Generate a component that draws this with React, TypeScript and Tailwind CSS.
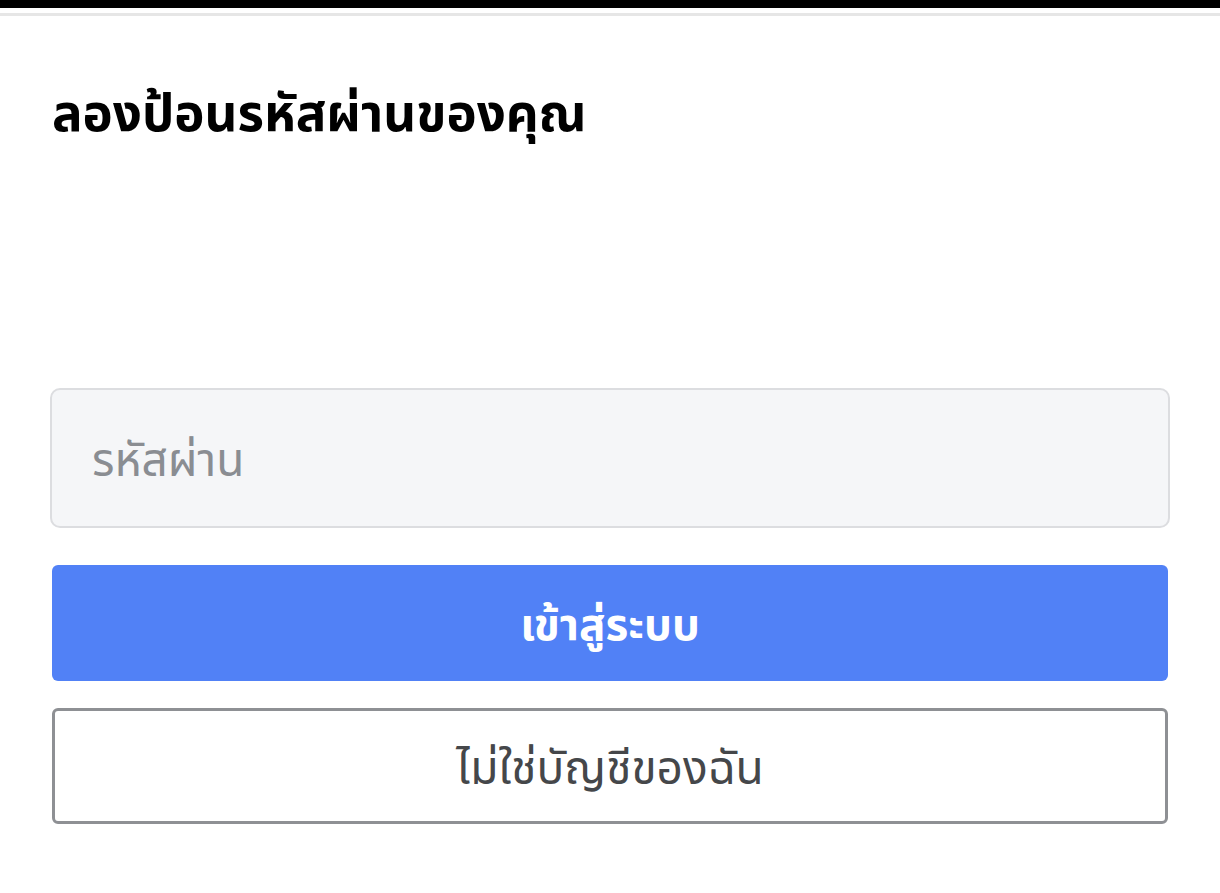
export default function App() {
  return (
    <div className="min-h-[893px] w-[1220px] bg-white font-['Noto_Sans','Noto_Sans_Thai',sans-serif]">
      {/* status bar edge */}
      <div className="h-[8px] bg-black" />
      <div className="h-[5px] bg-white" />
      <div className="h-[3px] bg-[#e6e6e6]" />

      <div className="px-[52px]">
        <h1 className="mt-[65px] text-[51px] font-bold leading-[60px] text-black">
          ลองป้อนรหัสผ่านของคุณ
        </h1>

        <div className="mt-[247px] -mx-[2px] flex h-[140px] items-center rounded-[10px] border-2 border-[#dcdde0] bg-[#f5f6f8] px-[40px]">
          <span className="text-[46px] text-[#8a8d92]">รหัสผ่าน</span>
        </div>

        <button className="mt-[37px] flex h-[116px] w-full items-center justify-center rounded-[6px] bg-[#5181f6] text-[44px] font-bold text-white">
          เข้าสู่ระบบ
        </button>

        <button className="mt-[27px] flex h-[116px] w-full items-center justify-center rounded-[6px] border-[3px] border-[#8e9094] bg-white text-[46px] text-[#45474a]">
          ไม่ใช่บัญชีของฉัน
        </button>
      </div>
    </div>
  );
}
